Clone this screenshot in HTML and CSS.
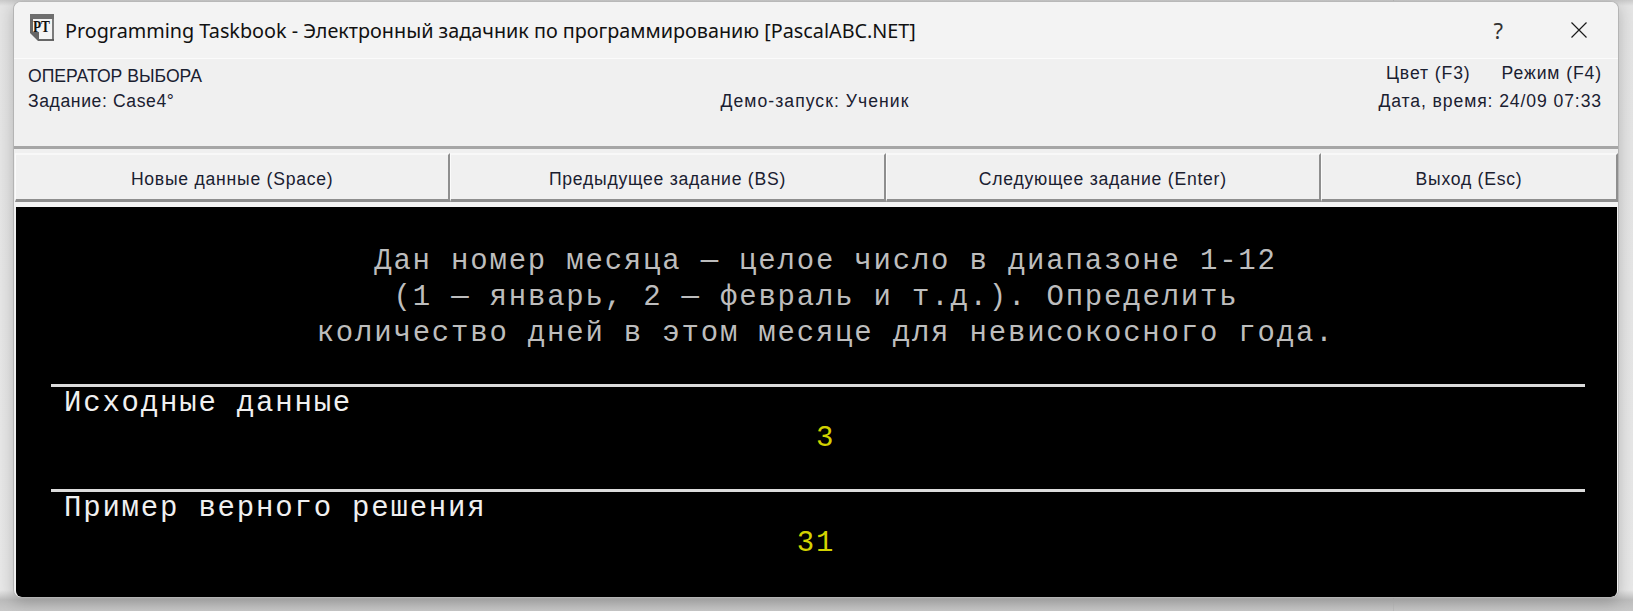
FILE: index.html
```html
<!DOCTYPE html>
<html lang="ru">
<head>
<meta charset="utf-8">
<title>Programming Taskbook</title>
<link rel="stylesheet" href="styles.css">
</head>
<body>
<div class="window">
  <header class="titlebar">
    <svg class="app-icon" width="26" height="28" viewBox="0 0 26 28">
      <path d="M1 1H25V27H9L1 19Z" fill="#f4f4f4"/>
      <path d="M1 0H25V5H1Z" fill="#6e6e6e"/>
      <path d="M1 5V19L9 27H25V25H10V18H4V5Z" fill="#666"/>
      <path d="M24 5V26" stroke="#555" stroke-width="1.5"/>
      <text x="4" y="18" class="icon-text" textLength="17" lengthAdjust="spacingAndGlyphs">PT</text>
    </svg>
    <span class="title-text">Programming Taskbook - Электронный задачник по программированию [PascalABC.NET]</span>
    <span class="help">?</span>
    <svg class="close" width="16" height="16" viewBox="0 0 16 16"><path d="M.5.5L15.5 15.5M15.5.5L.5 15.5" stroke="#1a1a1a" stroke-width="1.2" fill="none"/></svg>
  </header>
  <section class="info">
    <div class="info-left">
      <div class="caps">ОПЕРАТОР ВЫБОРА</div>
      <div class="tight">Задание: Case4°</div>
    </div>
    <div class="info-mid">Демо-запуск: Ученик</div>
    <div class="info-right">
      <div class="modes"><span>Цвет (F3)</span><span>Режим (F4)</span></div>
      <div>Дата, время: 24/09 07:33</div>
    </div>
  </section>
  <nav class="buttons">
    <div class="btn">Новые данные (Space)</div>
    <div class="btn">Предыдущее задание (BS)</div>
    <div class="btn">Следующее задание (Enter)</div>
    <div class="btn last">Выход (Esc)</div>
  </nav>
  <main class="console">
    <div class="task">
      <div class="shift">Дан номер месяца — целое число в диапазоне 1-12</div>
      <div>(1 — январь, 2 — февраль и т.д.). Определить</div>
      <div class="shift">количество дней в этом месяце для невисокосного года.</div>
    </div>
    <section class="block first">
      <div class="label">Исходные данные</div>
      <div class="value shift">3</div>
    </section>
    <section class="block">
      <div class="label">Пример верного решения</div>
      <div class="value">31</div>
    </section>
  </main>
</div>
</body>
</html>
```
FILE: styles.css
```css
* { box-sizing: border-box; }
html, body { margin: 0; height: 100%; }
body {
  height: 611px;
  overflow: hidden;
  padding: 1px 0 0 13px;
  background-color: #e6e6e6;
  background-image:
    linear-gradient(#bdbdbd, #bdbdbd),
    linear-gradient(to bottom, #c9c9c9 0, #e4e4e4 6px, #e8e8e8 590px, #bcbcbc 600px, #c8c8c8 611px);
  background-size: 1px 611px, 100% 100%;
  background-position: 1393px 0, 0 0;
  background-repeat: no-repeat;
}
.window {
  width: 1606px;
  height: 597px;
  background: #f0f0f0;
  border-radius: 8px;
  border: 1px solid #b4b4b4;
  border-top-color: #b8b8b8;
  box-shadow: 0 4px 16px rgba(0,0,0,.22);
  display: flex;
  flex-direction: column;
  overflow: hidden;
}
.titlebar {
  height: 57px;
  flex: none;
  display: flex;
  align-items: center;
  background: #f3f3f3;
  padding: 0 31px 0 15px;
  color: #111;
  border-bottom: 1px solid #fbfbfb;
}
.app-icon { flex: none; margin: 0 10px 5px 0; }
.icon-text { font: bold 16.5px "Liberation Serif", serif; fill: #111; }
.title-text {
  font: 19.8px "Noto Sans", sans-serif;
  flex: 1;
  white-space: nowrap;
}
.help { font: 22px "Noto Sans", sans-serif; margin-right: 68px; color: #333; }
.close { flex: none; }
.info {
  height: 90px;
  flex: none;
  display: grid;
  grid-template-columns: 1fr 1fr 1fr;
  padding: 5px 16px 0 14px;
  font: 17.6px/25px "Liberation Sans", sans-serif;
  letter-spacing: .9px;
  color: #1a2030;
  border-bottom: 3px solid #a6a6a6;
}
.caps { letter-spacing: 0; }
.tight { letter-spacing: .6px; }
.info-mid { padding-top: 25px; text-align: center; letter-spacing: 1.05px; }
.info-right { text-align: right; line-height: 28px; margin-top: -5px; }
.modes { display: flex; justify-content: flex-end; gap: 31px; }
.buttons {
  height: 58px;
  flex: none;
  display: flex;
  padding: 4px 0 0 1px;
  border-bottom: 5px solid #f4f4f4;
}
.btn {
  flex: 1;
  display: flex;
  align-items: center;
  justify-content: center;
  padding-top: 4px;
  font: 17.6px "Liberation Sans", sans-serif;
  letter-spacing: .75px;
  color: #1a2030;
  background: #f0f0f0;
  border-top: 2px solid #f8f8f8;
  border-left: 1px solid #fbfbfb;
  border-right: 2px solid #8e8e8e;
  border-bottom: 3px solid #8e8e8e;
}
.btn.last { flex: 0 0 297px; }
.console {
  flex: 1;
  background: #000;
  margin: 0 1px 0 2px;
  padding: 37px 32px 0 35px;
  font: 29px/36px "Liberation Mono", monospace;
  letter-spacing: 1.8px;
  color: #bdbdbd;
  border-bottom-left-radius: 6px;
  border-bottom-right-radius: 6px;
  box-shadow: 0 2px 0 #e8e8e8;
}
.task { text-align: center; margin-right: 4px; }
.shift { padding-left: 19px; }
.block {
  height: 105px;
  border-top: 3px solid #dcdcdc;
  color: #f0f0f0;
  white-space: nowrap;
}
.block.first { margin-top: 32px; }
.label { padding-left: 13px; height: 34px; line-height: 34px; }
.value { text-align: center; color: #d2d200; margin-right: 4px; }
```
